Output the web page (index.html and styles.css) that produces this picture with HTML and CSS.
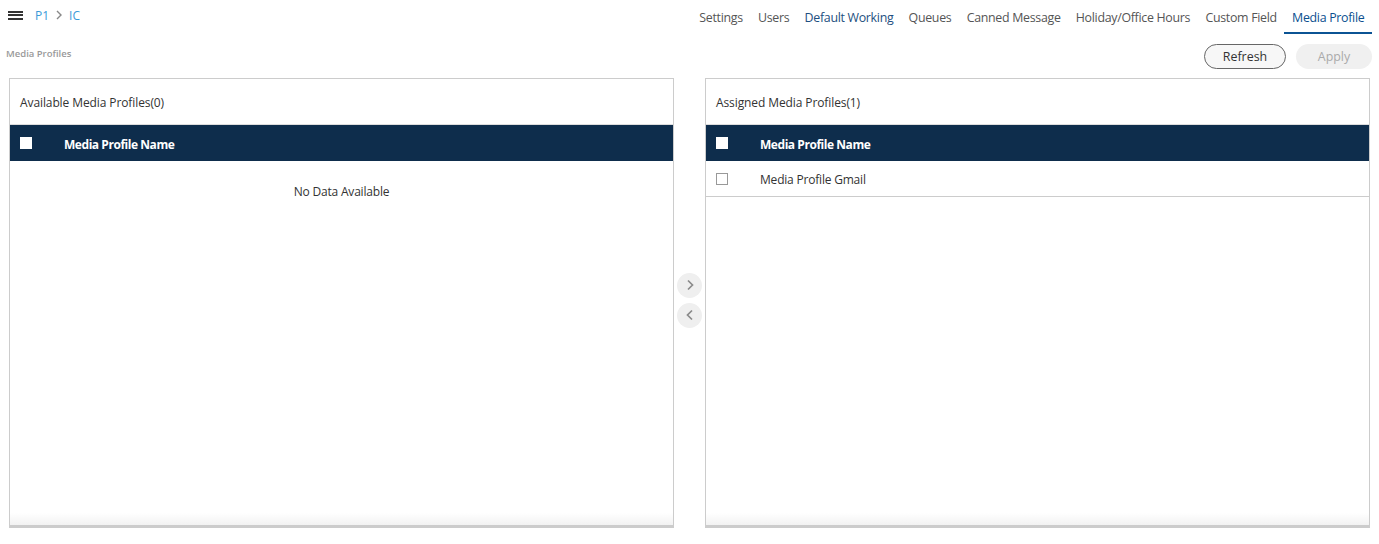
FILE: index.html
```html
<!DOCTYPE html>
<html>
<head>
<meta charset="utf-8">
<link rel="stylesheet" href="styles.css">
</head>
<body>
<div class="topbar">
  <div class="crumbs">
    <span class="burger"><i></i><i></i><i></i></span>
    <span class="crumb">P1</span>
    <svg class="sep" width="8" height="10" viewBox="0 0 8 10"><path d="M2 1 L6 5 L2 9" fill="none" stroke="#888" stroke-width="1.4"/></svg>
    <span class="crumb">IC</span>
  </div>
  <nav class="tabs">
    <a class="tab">Settings</a>
    <a class="tab">Users</a>
    <a class="tab blue">Default Working</a>
    <a class="tab">Queues</a>
    <a class="tab">Canned Message</a>
    <a class="tab">Holiday/Office Hours</a>
    <a class="tab">Custom Field</a>
    <a class="tab active">Media Profile</a>
  </nav>
</div>
<div class="toolbar">
  <span class="page-label">Media Profiles</span>
  <div class="actions">
    <button class="btn refresh">Refresh</button>
    <button class="btn apply" disabled>Apply</button>
  </div>
</div>
<div class="panels">
  <section class="panel">
    <div class="panel-title">Available Media Profiles(0)</div>
    <div class="grid-head">
      <span class="cb white"></span>
      <span class="col">Media Profile Name</span>
    </div>
    <div class="empty">No Data Available</div>
  </section>
  <div class="movers">
    <button class="mover"><svg width="12" height="14" viewBox="0 0 12 14"><path d="M4 2.5 L8.5 7 L4 11.5" fill="none" stroke="#8a8a8a" stroke-width="1.7"/></svg></button>
    <button class="mover"><svg width="12" height="14" viewBox="0 0 12 14"><path d="M8 2.5 L3.5 7 L8 11.5" fill="none" stroke="#8a8a8a" stroke-width="1.7"/></svg></button>
  </div>
  <section class="panel">
    <div class="panel-title">Assigned Media Profiles(1)</div>
    <div class="grid-head">
      <span class="cb white"></span>
      <span class="col">Media Profile Name</span>
    </div>
    <div class="grid-row">
      <span class="cb"></span>
      <span class="col">Media Profile Gmail</span>
    </div>
  </section>
</div>
</body>
</html>
```

FILE: styles.css
```css
* { box-sizing: border-box; }
html, body { margin: 0; padding: 0; background: #fff; }
body {
  font-family: "Open Sans", "Noto Sans", sans-serif;
  font-size: 12px;
  color: #333;
  width: 1379px;
  height: 544px;
  overflow: hidden;
}
.topbar {
  display: flex;
  justify-content: space-between;
  align-items: flex-start;
  height: 34px;
}
.crumbs {
  display: flex;
  align-items: center;
  padding: 4px 0 0 8px;
  height: 16px;
}
.burger {
  display: flex;
  flex-direction: column;
  justify-content: space-between;
  width: 15px;
  height: 9px;
  margin-right: 12px;
  margin-top: 10px;
}
.burger i {
  display: block;
  height: 2px;
  background: #333;
}
.crumb {
  color: #3a9ad9;
  font-size: 12px;
  margin-top: 11px;
}
.sep { margin: 9px 6px 0 6px; }
.tabs {
  display: flex;
  height: 34px;
  padding-right: 7px;
}
.tab {
  display: flex;
  align-items: center;
  padding: 0 7.6px;
  font-size: 12.4px;
  color: #555;
  letter-spacing: -0.3px;
  border-bottom: 2px solid transparent;
  padding-top: 2px;
}
.tab.blue { color: #1d4f80; }
.tab.active { color: #0b4f8f; border-bottom-color: #0b5394; }
.toolbar {
  display: flex;
  justify-content: space-between;
  align-items: center;
  height: 44px;
  padding: 0 7px 0 6px;
}
.page-label {
  font-size: 9.5px;
  color: #999;
  font-weight: 600;
  margin-top: -6px;
}
.actions { display: flex; gap: 10px; margin-top: 1px; }
.btn {
  font-family: inherit;
  font-size: 12.4px;
  height: 25px;
  border-radius: 13px;
  padding: 0;
}
.refresh {
  width: 82px;
  border: 1px solid #666;
  background: #f7f7f7;
  color: #333;
}
.apply {
  width: 76px;
  border: none;
  background: #f0f0f0;
  color: #aaa;
}
.panels {
  display: flex;
  padding: 0 9px;
  height: 450px;
}
.panel {
  flex: 1;
  border: 1px solid #ccc;
  border-bottom: 3px solid #ccc;
  display: flex;
  flex-direction: column;
  background: linear-gradient(to bottom, #fff 0, #fff calc(100% - 12px), #f2f2f2 100%);
}
.panel-title {
  height: 46px;
  display: flex;
  align-items: center;
  padding-left: 10px;
  padding-top: 2px;
  font-size: 12px;
  color: #333;
  letter-spacing: -0.1px;
  border-bottom: 1px solid #ddd;
}
.grid-head {
  height: 36px;
  background: #0e2d4c;
  display: flex;
  align-items: center;
  color: #fff;
  font-weight: 700;
  padding-left: 10px;
  padding-top: 2px;
}
.grid-head .col { letter-spacing: -0.45px; }
.grid-head .cb { margin-top: -2px; }
.grid-row {
  height: 36px;
  display: flex;
  align-items: center;
  padding-left: 10px;
  padding-top: 2px;
  border-bottom: 1px solid #ccc;
  color: #333;
}
.grid-row .cb { margin-top: -2px; }
.grid-row .col { letter-spacing: -0.2px; }
.cb {
  width: 12px;
  height: 12px;
  border: 1px solid #999;
  background: #fff;
  margin-right: 32px;
  flex: none;
}
.cb.white { border-color: #fff; }
.col { font-size: 12px; }
.empty {
  text-align: center;
  padding-top: 22px;
  color: #333;
  letter-spacing: -0.2px;
}
.movers {
  width: 31px;
  display: flex;
  flex-direction: column;
  align-items: center;
  justify-content: center;
  gap: 5px;
  padding-bottom: 6px;
}
.mover {
  width: 25px;
  height: 25px;
  border-radius: 50%;
  border: none;
  background: #efefef;
  padding: 0;
  display: flex;
  align-items: center;
  justify-content: center;
}
```
